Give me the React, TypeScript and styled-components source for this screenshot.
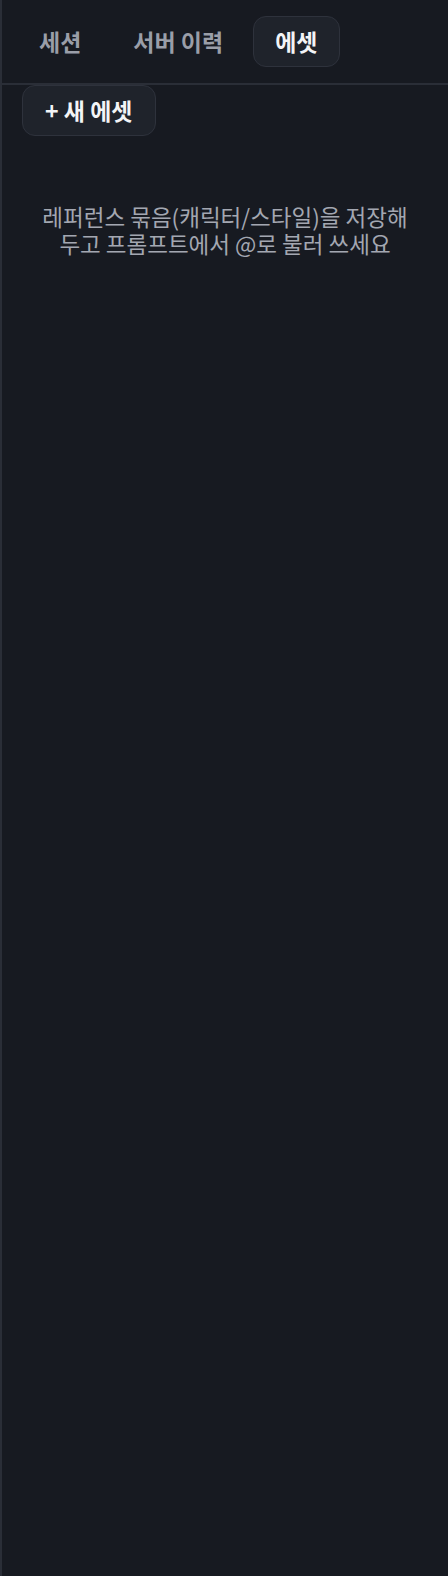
import React, { useState } from 'react';
import styled, { createGlobalStyle } from 'styled-components';

const GlobalStyle = createGlobalStyle`
  html, body {
    margin: 0;
    padding: 0;
    background: #171a21;
  }
  * {
    box-sizing: border-box;
  }
`;

const Panel = styled.div`
  min-height: 100vh;
  background: #171a21;
  border-left: 2px solid #2a2e37;
  font-family: 'Noto Sans CJK KR', 'Noto Sans', sans-serif;
  display: flex;
  flex-direction: column;
`;

const TabBar = styled.nav`
  display: flex;
  gap: 8px;
  padding: 16px 15px 16px;
  border-bottom: 2px solid #2a2e37;
`;

const Tab = styled.button<{ $active?: boolean }>`
  font-family: inherit;
  font-size: 23px;
  font-weight: 700;
  line-height: 33px;
  padding: 8px 21px;
  border-radius: 13px;
  border: 1px solid ${(p) => (p.$active ? '#2e323c' : 'transparent')};
  background: ${(p) => (p.$active ? '#1f232b' : 'transparent')};
  color: ${(p) => (p.$active ? '#f3f4f6' : '#9a9ea8')};
  cursor: pointer;
`;

const Body = styled.section`
  padding: 0 20px;
  display: flex;
  flex-direction: column;
  align-items: flex-start;
`;

const NewButton = styled.button`
  font-family: inherit;
  font-size: 23px;
  font-weight: 700;
  line-height: 33px;
  padding: 8px 22px;
  border-radius: 13px;
  border: 1px solid #2e323c;
  background: #1f232b;
  color: #f3f4f6;
  cursor: pointer;
`;

const Empty = styled.p`
  align-self: stretch;
  margin: 67px 0 0;
  text-align: center;
  font-size: 22.5px;
  line-height: 27px;
  word-break: keep-all;
  color: #a3a7b1;
`;

const tabs = ['세션', '서버 이력', '에셋'];

export default function App() {
  const [active, setActive] = useState('에셋');
  return (
    <>
      <GlobalStyle />
      <Panel>
        <TabBar>
          {tabs.map((t) => (
            <Tab key={t} $active={t === active} onClick={() => setActive(t)}>
              {t}
            </Tab>
          ))}
        </TabBar>
        <Body>
          <NewButton>+ 새 에셋</NewButton>
          <Empty>레퍼런스 묶음(캐릭터/스타일)을 저장해 두고 프롬프트에서 @로 불러 쓰세요</Empty>
        </Body>
      </Panel>
    </>
  );
}
